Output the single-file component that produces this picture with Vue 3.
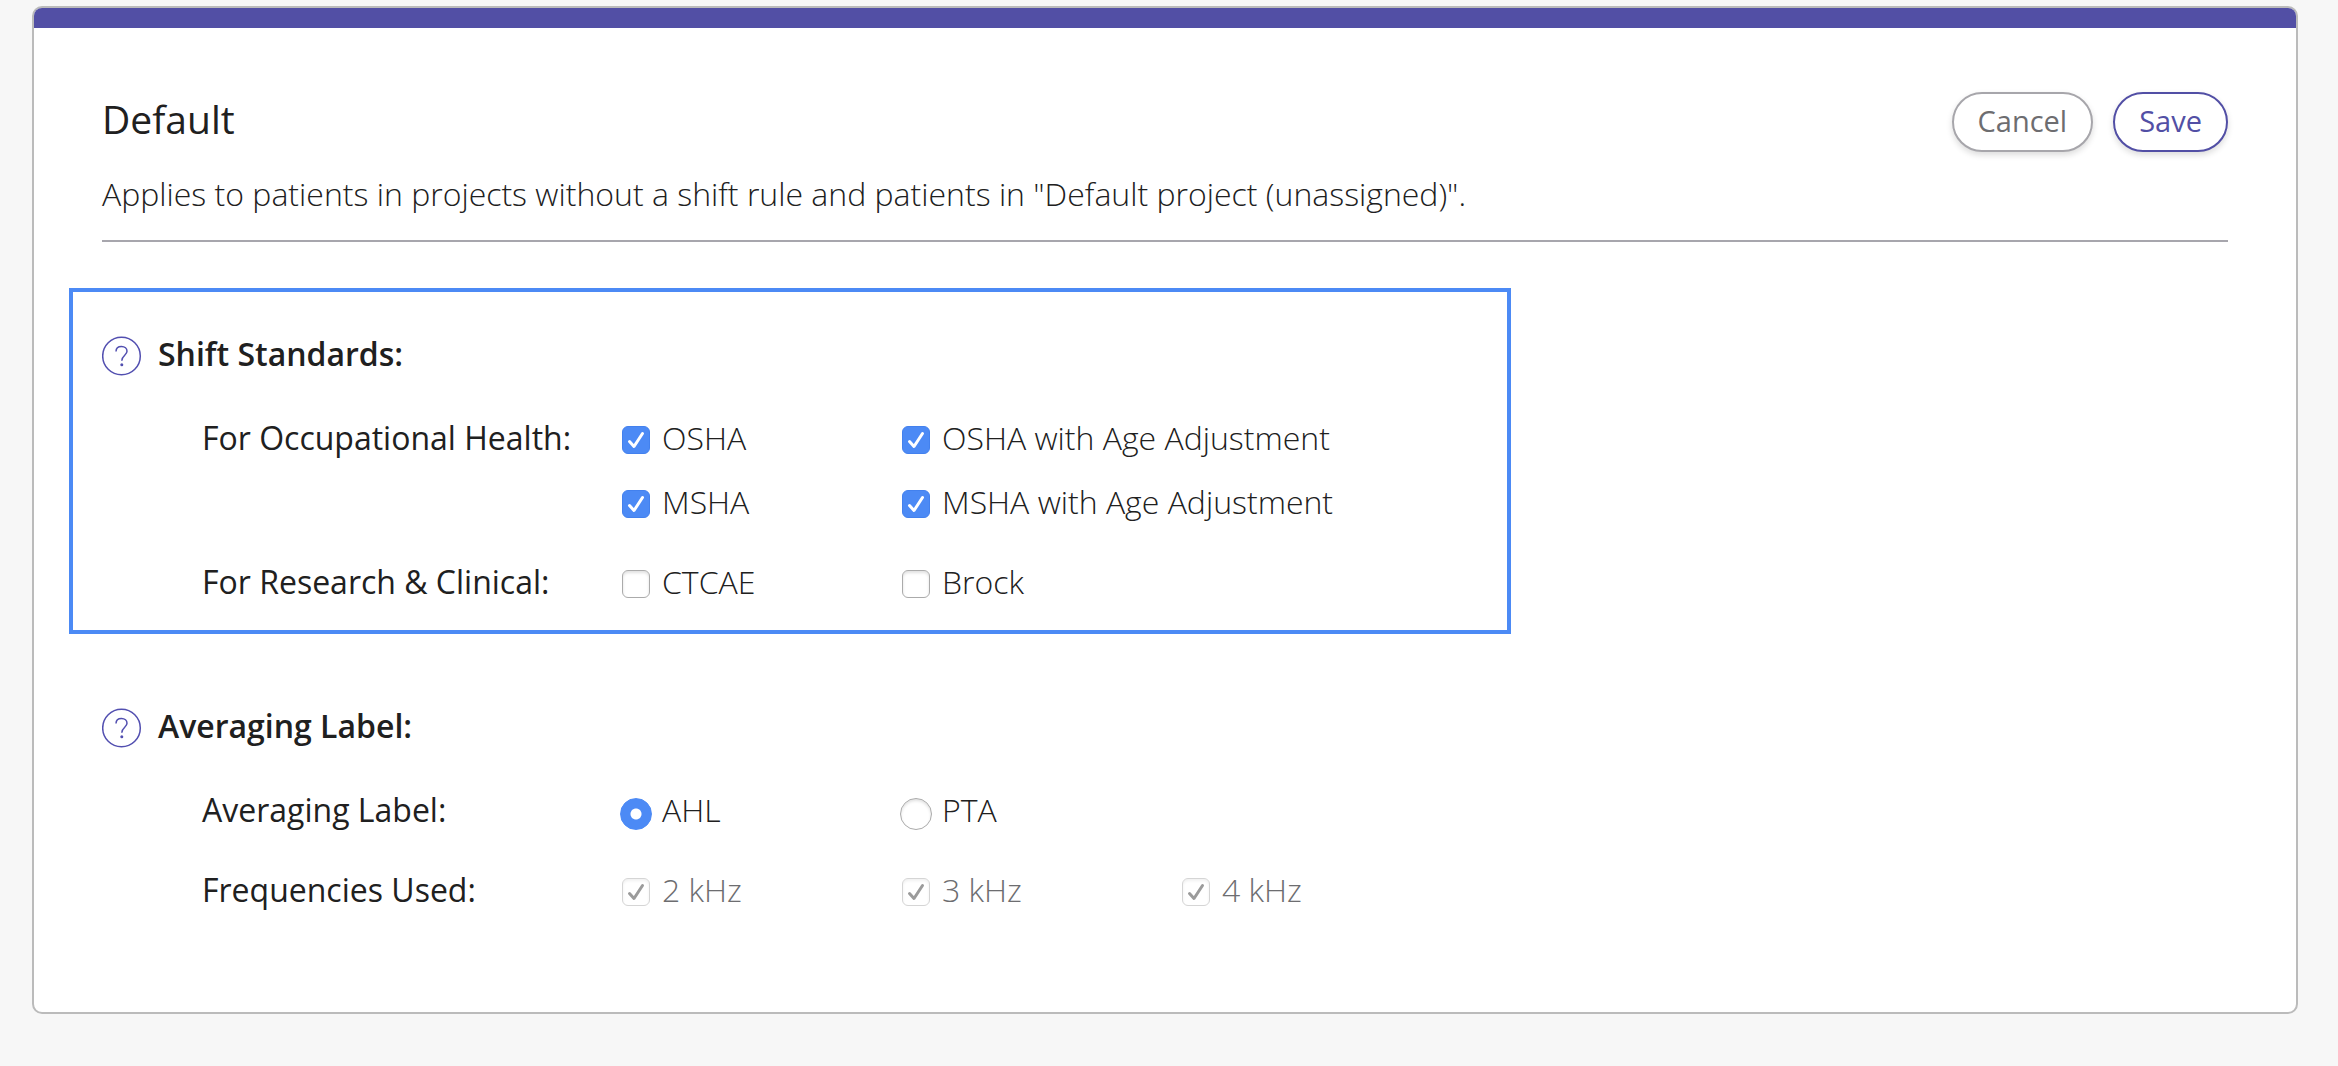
<script setup>
import { ref } from 'vue'

const occupational = ref([
  { id: 'osha', label: 'OSHA', checked: true },
  { id: 'osha-age', label: 'OSHA with Age Adjustment', checked: true },
  { id: 'msha', label: 'MSHA', checked: true },
  { id: 'msha-age', label: 'MSHA with Age Adjustment', checked: true },
])
const research = ref([
  { id: 'ctcae', label: 'CTCAE', checked: false },
  { id: 'brock', label: 'Brock', checked: false },
])
const averaging = ref('AHL')
const averagingOptions = ['AHL', 'PTA']
const frequencies = ['2 kHz', '3 kHz', '4 kHz']
</script>

<template>
  <main class="page">
    <form class="card" @submit.prevent>
      <header class="header">
        <div class="title-row">
          <h1 class="title">Default</h1>
          <div class="actions">
            <button type="button" class="btn">Cancel</button>
            <button type="submit" class="btn btn-primary">Save</button>
          </div>
        </div>
        <p class="description">Applies to patients in projects without a shift rule and patients in "Default project (unassigned)".</p>
      </header>

      <section class="section highlighted">
        <div class="heading">
          <button type="button" class="help" aria-label="About shift standards">
            <svg viewBox="0 0 40 40" width="40" height="40" aria-hidden="true">
              <circle cx="19.500" cy="20" r="18.800" />
              <path d="M14 15.500C14 12.300 16.300 10.500 19.500 10.500C22.800 10.500 25 12.500 25 15.300C25 19.300 19.800 19.300 19.800 24.800" />
              <circle class="dot" cx="19.800" cy="28.800" r="1.500" />
            </svg>
          </button>
          <h2>Shift Standards:</h2>
        </div>
        <div class="rows">
          <div class="row" role="group" aria-labelledby="occupational-label">
            <span id="occupational-label">For Occupational Health:</span>
            <div class="options pairs">
              <label v-for="o in occupational" :key="o.id" class="option">
                <input v-model="o.checked" type="checkbox" />
                <span>{{ o.label }}</span>
              </label>
            </div>
          </div>
          <div class="row" role="group" aria-labelledby="research-label">
            <span id="research-label">For Research &amp; Clinical:</span>
            <div class="options pairs">
              <label v-for="o in research" :key="o.id" class="option">
                <input v-model="o.checked" type="checkbox" />
                <span>{{ o.label }}</span>
              </label>
            </div>
          </div>
        </div>
      </section>

      <section class="section">
        <div class="heading">
          <button type="button" class="help" aria-label="About averaging label">
            <svg viewBox="0 0 40 40" width="40" height="40" aria-hidden="true">
              <circle cx="19.500" cy="20" r="18.800" />
              <path d="M14 15.500C14 12.300 16.300 10.500 19.500 10.500C22.800 10.500 25 12.500 25 15.300C25 19.300 19.800 19.300 19.800 24.800" />
              <circle class="dot" cx="19.800" cy="28.800" r="1.500" />
            </svg>
          </button>
          <h2>Averaging Label:</h2>
        </div>
        <div class="rows">
          <div class="row" role="radiogroup" aria-labelledby="averaging-label">
            <span id="averaging-label">Averaging Label:</span>
            <div class="options">
              <label v-for="o in averagingOptions" :key="o" class="option">
                <input v-model="averaging" type="radio" name="averaging" :value="o" />
                <span>{{ o }}</span>
              </label>
            </div>
          </div>
          <div class="row" role="group" aria-labelledby="frequencies-label">
            <span id="frequencies-label">Frequencies Used:</span>
            <div class="options">
              <label v-for="f in frequencies" :key="f" class="option disabled">
                <input type="checkbox" checked disabled />
                <span>{{ f }}</span>
              </label>
            </div>
          </div>
        </div>
      </section>
    </form>
  </main>
</template>

<style>
body {
  background: #f7f7f7;
}
</style>

<style scoped>
.page {
  padding: 6px 40px 52px 32px;
  font: 400 32px/44px "Open Sans", "Noto Sans", sans-serif;
  color: #202020;
}
.card {
  background: #fff;
  border: 2px solid #bbb;
  border-radius: 10px;
  padding: 0 68px 100px;
  overflow: hidden;
}
.card::before {
  content: "";
  display: block;
  height: 20px;
  margin: 0 -68px 64px;
  background: #524fa5;
}
.header {
  border-bottom: 2px solid #a7a6ad;
  padding-bottom: 24px;
  margin-bottom: 46px;
}
.title-row {
  display: flex;
  justify-content: space-between;
  align-items: flex-start;
  margin-bottom: 20px;
}
.title {
  margin: 0;
  font-size: 39px;
  line-height: 54px;
  font-weight: 400;
}
.actions {
  display: flex;
  gap: 20px;
}
.btn {
  height: 60px;
  padding: 0 24px 2px;
  border: 2px solid #a7a6ab;
  border-radius: 30px;
  background: #fff;
  color: #6d6d70;
  font: inherit;
  font-size: 29px;
  line-height: 40px;
  box-shadow: 0 3px 6px rgba(0, 0, 0, 0.14);
}
.btn-primary {
  border-color: #524fa5;
  color: #524fa5;
}
.description {
  margin: 0;
  font-weight: 300;
}
.highlighted {
  box-sizing: border-box;
  width: 1442px;
  max-width: 100%;
  margin: 0 0 70px -33px;
  padding: 40px 29px 26px;
  border: 4px solid #4c8af5;
}
.heading {
  display: flex;
  align-items: flex-start;
  gap: 16px;
  margin-bottom: 40px;
}
h2 {
  margin: 0;
  font-size: 32px;
  font-weight: 600;
}
.help {
  display: flex;
  margin: 4px 0 0;
  padding: 0;
  border: 0;
  background: none;
}
.help svg {
  fill: none;
  stroke: #524fb0;
  stroke-width: 1.500;
}
.help .dot {
  fill: #524fb0;
  stroke: none;
}
.rows {
  display: flex;
  flex-direction: column;
  gap: 36px;
  padding-left: 100px;
}
.row {
  display: grid;
  grid-template-columns: 418px 1fr;
}
.options {
  display: grid;
  grid-template-columns: 280px 280px 280px;
  row-gap: 20px;
}
.options.pairs {
  grid-template-columns: 280px auto;
  justify-content: start;
}
.option {
  display: flex;
  align-items: flex-start;
  font-weight: 300;
  white-space: nowrap;
}
.option input {
  appearance: none;
  flex: none;
  box-sizing: border-box;
  width: 28px;
  height: 28px;
  margin: 10px 12px 0 2px;
  border: 1px solid #ababab;
  border-radius: 6px;
  background: #fff center / 28px 28px no-repeat;
  box-shadow: inset 0 2px 3px rgba(0, 0, 0, 0.12);
}
.option input[type="checkbox"]:checked {
  border-color: #4381ee;
  background-color: #4c8af5;
  background-image: url("data:image/svg+xml,%3Csvg xmlns='http://www.w3.org/2000/svg' viewBox='0 0 28 28'%3E%3Cpath d='M7.500 15.500L12 20.500L20.500 7.500' fill='none' stroke='white' stroke-width='3' stroke-linecap='round' stroke-linejoin='round'/%3E%3C/svg%3E");
  box-shadow: none;
}
.option input[type="checkbox"]:disabled {
  border-color: #d5d5d5;
  background-color: #fff;
  background-image: url("data:image/svg+xml,%3Csvg xmlns='http://www.w3.org/2000/svg' viewBox='0 0 28 28'%3E%3Cpath d='M7.500 15.500L12 20.500L20.500 7.500' fill='none' stroke='%239b9b9b' stroke-width='3' stroke-linecap='round' stroke-linejoin='round'/%3E%3C/svg%3E");
  box-shadow: inset 0 2px 3px rgba(0, 0, 0, 0.06);
}
.option input[type="radio"] {
  width: 32px;
  height: 32px;
  margin: 10px 10px 0 0;
  border-radius: 50%;
}
.option input[type="radio"]:checked {
  border-color: #4c8af5;
  background: radial-gradient(circle, #fff 5px, #4c8af5 6px);
  box-shadow: none;
}
.disabled {
  color: #6d6d70;
}
</style>
